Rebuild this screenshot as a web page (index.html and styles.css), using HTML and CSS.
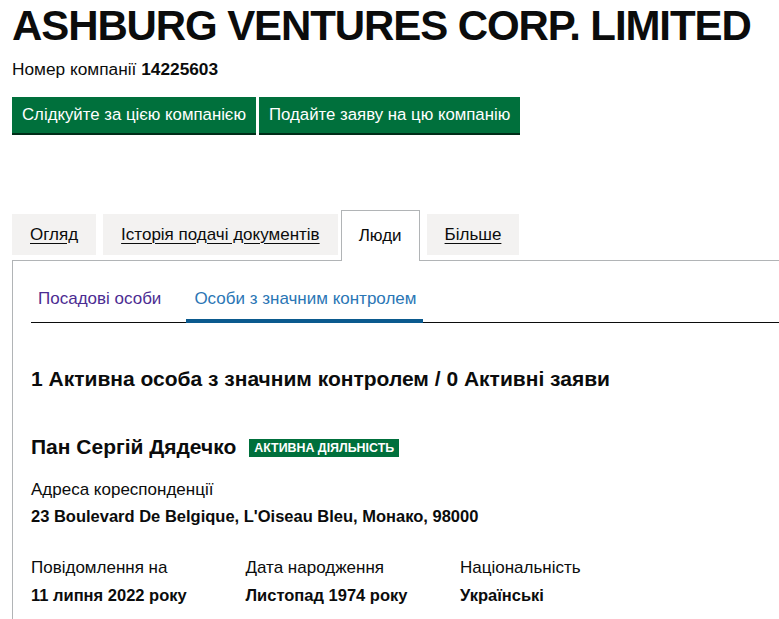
FILE: index.html
```html
<!DOCTYPE html>
<html lang="uk">
<head>
<meta charset="utf-8">
<title>ASHBURG VENTURES CORP. LIMITED</title>
<link rel="stylesheet" href="styles.css">
</head>
<body>
<div class="page">
  <h1 class="title">ASHBURG VENTURES CORP. LIMITED</h1>
  <p class="company-number">Номер компанії <strong>14225603</strong></p>
  <div class="actions">
    <a class="button" href="#">Слідкуйте за цією компанією</a>
    <a class="button" href="#">Подайте заяву на цю компанію</a>
  </div>

  <ul class="tabs">
    <li class="tab"><a href="#">Огляд</a></li>
    <li class="tab"><a href="#">Історія подачі документів</a></li>
    <li class="tab tab-active"><span>Люди</span></li>
    <li class="tab"><a href="#">Більше</a></li>
  </ul>

  <section class="panel">
    <nav class="subtabs">
      <a class="subtab subtab-visited" href="#">Посадові особи</a>
      <a class="subtab subtab-active" href="#">Особи з значним контролем</a>
    </nav>

    <h2 class="summary">1 Активна особа з значним контролем / 0 Активні заяви</h2>

    <div class="person">
      <div class="person-head">
        <h3 class="person-name">Пан Сергій Дядечко</h3>
        <span class="badge">Активна діяльність</span>
      </div>
      <dl class="field">
        <dt>Адреса кореспонденції</dt>
        <dd>23 Boulevard De Belgique, L'Oiseau Bleu, Монако, 98000</dd>
      </dl>
      <div class="fields-row">
        <dl class="field col">
          <dt>Повідомлення на</dt>
          <dd>11 липня 2022 року</dd>
        </dl>
        <dl class="field col">
          <dt>Дата народження</dt>
          <dd>Листопад 1974 року</dd>
        </dl>
        <dl class="field col">
          <dt>Національність</dt>
          <dd>Українські</dd>
        </dl>
      </div>
    </div>
  </section>
</div>
</body>
</html>
```

FILE: styles.css
```css
* { box-sizing: border-box; }
html, body { margin: 0; padding: 0; background: #ffffff; }
body {
  font-family: "Liberation Sans", Arial, sans-serif;
  color: #0b0c0c;
}
.page {
  padding-left: 12px;
}
.title {
  margin: 0;
  padding-top: 2px;
  font-size: 42px;
  line-height: 48px;
  font-weight: 700;
  letter-spacing: -1.1px;
  white-space: nowrap;
}
.company-number {
  margin: 8px 0 0;
  font-size: 17.3px;
  line-height: 22px;
}
.company-number strong { font-weight: 700; }
.actions {
  display: flex;
  gap: 3px;
  margin-top: 17px;
}
.button {
  display: block;
  background: #00703c;
  color: #ffffff;
  text-decoration: none;
  font-size: 16.8px;
  line-height: 20px;
  padding: 8px 10px;
  box-shadow: 0 2px 0 #002d18;
  height: 36px;
}
.tabs {
  list-style: none;
  margin: 77px 0 -1px;
  padding: 0;
  display: flex;
  align-items: flex-end;
  gap: 7px;
  position: relative;
  z-index: 1;
}
.tab {
  background: #f3f2f1;
  height: 41px;
  padding: 0 18px;
  display: flex;
  align-items: center;
  font-size: 17px;
  margin-bottom: 6px;
}
.tab a {
  color: #0b0c0c;
  text-decoration: underline;
  text-underline-offset: 3px;
  text-decoration-thickness: 1px;
}
.tab-active {
  background: #ffffff;
  border: 1px solid #b1b4b6;
  border-bottom: 0;
  height: 51px;
  margin: 0 0 0 -4px;
  padding: 0 17px;
}
.panel {
  border-top: 1px solid #b1b4b6;
  border-left: 1px solid #b1b4b6;
  padding: 18px 0 20px 18px;
}
.subtabs {
  display: flex;
  gap: 25px;
  border-bottom: 1px solid #0b0c0c;
  padding-left: 7px;
}
.subtab {
  font-size: 17px;
  line-height: 22px;
  text-decoration: none;
  padding: 9px 0 12px;
  display: block;
}
.subtab-visited { color: #4c2c92; }
.subtab-active {
  color: #2a76b5;
  padding: 9px 6px 8px 8px;
  border-bottom: 4px solid #0b5a8e;
  margin-bottom: -1px;
}
.summary {
  margin: 43px 0 0;
  font-size: 21px;
  line-height: 26px;
  font-weight: 700;
}
.person { margin-top: 42px; }
.person-head {
  display: flex;
  align-items: center;
  gap: 13px;
}
.person-name {
  margin: 0;
  font-size: 21px;
  line-height: 26px;
  font-weight: 700;
}
.badge {
  background: #00703c;
  color: #ffffff;
  font-size: 12.4px;
  line-height: 18px;
  font-weight: 700;
  text-transform: uppercase;
  padding: 0 5px;
  margin-top: 2px;
}
.field { margin: 19px 0 0; }
.field dt {
  font-size: 17px;
  line-height: 22px;
}
.field dd {
  margin: 4px 0 0;
  font-size: 16.5px;
  line-height: 22px;
  font-weight: 700;
}
.fields-row {
  display: flex;
  margin-top: 11px;
}
.fields-row .field { margin-top: 19px; }
.fields-row .col { width: 214.5px; }
.fields-row .field dd { margin-top: 5px; }
```
